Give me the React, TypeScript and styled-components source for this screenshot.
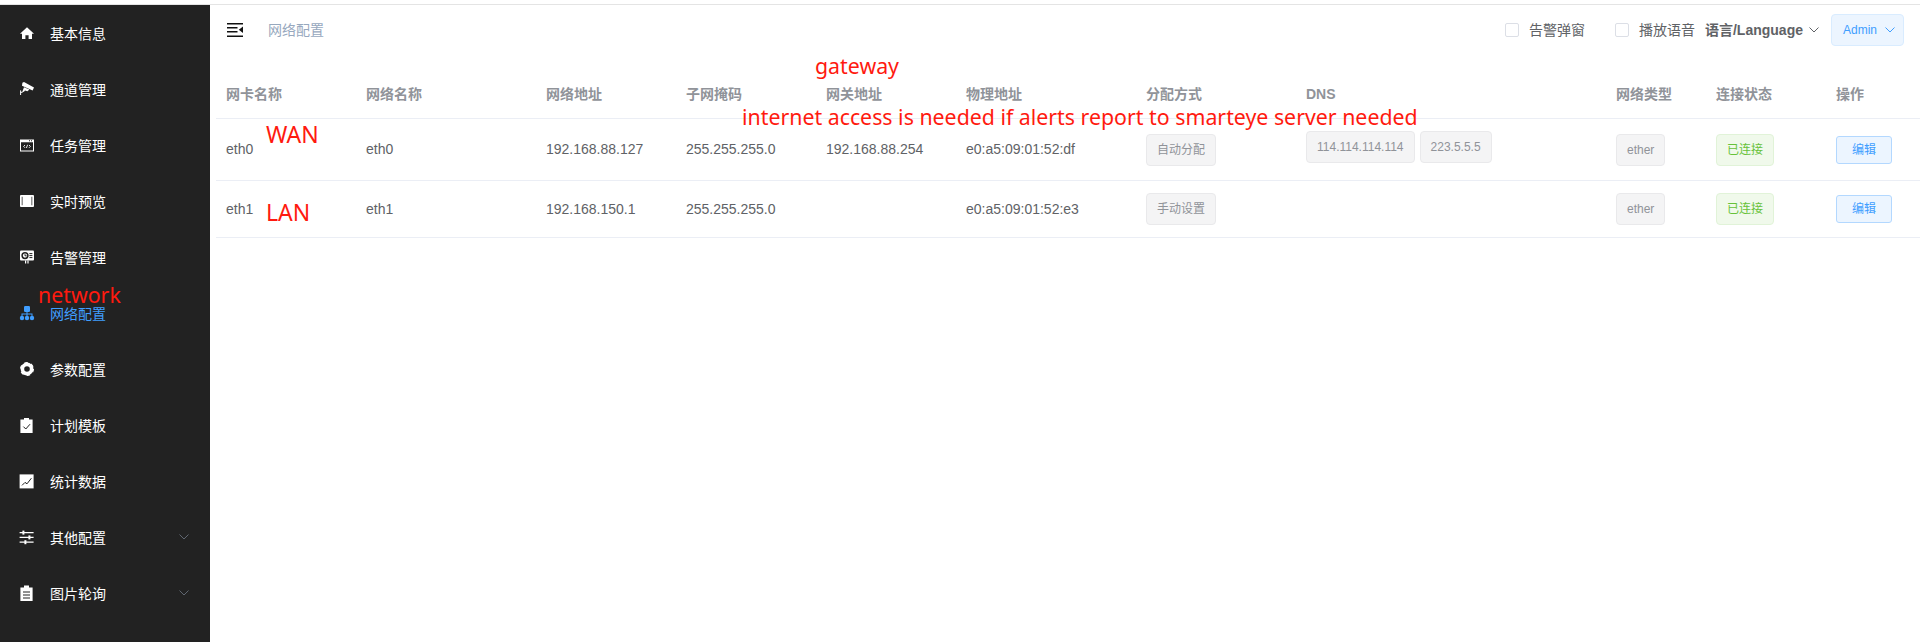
import React from 'react';
import styled, {createGlobalStyle} from 'styled-components';

const FONT = `"Liberation Sans", "Noto Sans CJK SC", sans-serif`;
const COLUMNS = '140px 180px 140px 140px 140px 180px 160px 310px 100px 120px 1fr';

const BG = '#222222';

const HomeIcon = () => (
    <svg viewBox="0 0 16 16" fill="currentColor">
        <path d="M8 2.2 15 8.8H13V14H9.6V10.2H6.400V14H3V8.8H1Z"/>
    </svg>
);

const CameraIcon = () => (
    <svg viewBox="0 0 16 16" fill="currentColor">
        <path d="M3.400 1.800 5 1 15 6.400 13.600 9.400 3 4.800Z"/>
        <path d="M5 6.200 10.400 8.600 8.400 10.200 6 9.400 4.800 11 3.400 10.400Z"/>
        <path d="M1.600 9.400V14" stroke="currentColor" strokeWidth="1"/>
        <path d="M1.600 11.600 4 10.800" stroke="currentColor" strokeWidth="1"/>
    </svg>
);

const WindowIcon = () => (
    <svg viewBox="0 0 16 16" fill="currentColor">
        <path fillRule="evenodd" d="M1 2.400h14v12H1ZM2 5.200v8.200h12V5.200Z"/>
        <path d="M10 3.200h1v1h-1ZM12 3.200h1v1h-1Z" fill={BG}/>
        <path d="M6 8 4.600 9.400 6 10.800M7.400 11 8.600 7.800M10 8l1.400 1.400L10 10.800" fill="none" stroke="currentColor" strokeWidth=".9"/>
    </svg>
);

const FilmIcon = () => (
    <svg viewBox="0 0 16 16" fill="currentColor">
        <rect x="1" y="2" width="14" height="12" rx="1"/>
        <path d="M2.600 3.800h1.200v8.400H2.600ZM12.200 3.800h1.200v8.400h-1.200Z" fill="#777"/>
    </svg>
);

const AlertIcon = () => (
    <svg viewBox="0 0 16 16" fill="currentColor">
        <rect x="1" y="1.600" width="14" height="10" rx="1"/>
        <circle cx="6" cy="6.600" r="2.900" fill="none" stroke={BG} strokeWidth="1.500"/>
        <path d="M6 5.200V6.800H7.600M10.400 4.600H13.400M10.400 6.600H13.400M10.400 8.600H13.400" fill="none" stroke={BG} strokeWidth="1"/>
        <path d="M6 11.600h1.200v3H6ZM8.400 11.600h1.200v3H8.400Z"/>
    </svg>
);

const NetworkIcon = () => (
    <svg viewBox="0 0 16 16" fill="currentColor">
        <rect x="5" y="1" width="6" height="6" rx="1.200"/>
        <path d="M7.500 6.500h1v2H13.500V11h-1V9.500H8.500V11h-1V9.500H3.500V11h-1V8.500H7.500Z"/>
        <circle cx="3" cy="13" r="2.200"/>
        <circle cx="8" cy="13" r="2.200"/>
        <circle cx="13" cy="13" r="2.200"/>
    </svg>
);

const GearIcon = () => (
    <svg viewBox="0 0 16 16" fill="none" stroke="currentColor">
        <circle cx="8" cy="8" r="4.600" strokeWidth="3.600"/>
        <circle cx="8" cy="8" r="6.400" strokeWidth="1.200" strokeDasharray="3.350 3.350"/>
    </svg>
);

const ClipboardCheckIcon = () => (
    <svg viewBox="0 0 16 16" fill="currentColor">
        <path d="M1.400 2.400H5V1h5v1.400h3.600V16H1.400Z"/>
        <path d="M4.400 9.600 6.800 12 11 7.200" fill="none" stroke={BG} strokeWidth="1"/>
    </svg>
);

const ChartIcon = () => (
    <svg viewBox="0 0 16 16" fill="currentColor">
        <rect x="0.600" y="1.400" width="14" height="14"/>
        <path d="M3 12.400 6 9.400 8 10.800 12.400 5.200" fill="none" stroke={BG} strokeWidth="1"/>
    </svg>
);

const SlidersIcon = () => (
    <svg viewBox="0 0 16 16" fill="currentColor">
        <path d="M.600 3h14v1.200H.600ZM.600 7.800h14V9H.600ZM.600 12.600h14v1.200H.600Z"/>
        <rect x="3.400" y="1.600" width="2" height="4"/>
        <rect x="9.400" y="6.400" width="2" height="4"/>
        <rect x="5.400" y="11.200" width="2" height="4"/>
    </svg>
);

const ClipboardListIcon = () => (
    <svg viewBox="0 0 16 16" fill="currentColor">
        <path d="M1.400 2.400H5V.600h5v1.800h3.600V16H1.400Z"/>
        <path d="M4 7h7M4 10h7M4 13h7" fill="none" stroke={BG} strokeWidth="1"/>
    </svg>
);

const Chevron = () => (
    <svg viewBox="0 0 10 6" fill="none" stroke="currentColor" strokeWidth="1">
        <path d="M.5.5 5 5 9.500.5"/>
    </svg>
);

const Hamburger = () => (
    <svg viewBox="0 0 16 14" width="16" height="14" fill="#111">
        <path d="M0 0h16v1.500H0ZM0 4h10.500v1.500H0ZM0 8h10.500v1.500H0ZM0 12.500h16V14H0ZM16 3.500v6.500L11.800 6.800Z"/>
    </svg>
);

const MENU = [
    {label: '基本信息', icon: <HomeIcon/>},
    {label: '通道管理', icon: <CameraIcon/>},
    {label: '任务管理', icon: <WindowIcon/>},
    {label: '实时预览', icon: <FilmIcon/>},
    {label: '告警管理', icon: <AlertIcon/>},
    {label: '网络配置', icon: <NetworkIcon/>, active: true},
    {label: '参数配置', icon: <GearIcon/>},
    {label: '计划模板', icon: <ClipboardCheckIcon/>},
    {label: '统计数据', icon: <ChartIcon/>},
    {label: '其他配置', icon: <SlidersIcon/>, sub: true},
    {label: '图片轮询', icon: <ClipboardListIcon/>, sub: true},
];

const HEADS = ['网卡名称', '网络名称', '网络地址', '子网掩码', '网关地址', '物理地址', '分配方式', 'DNS', '网络类型', '连接状态', '操作'];

const ROWS = [
    {
        name: 'eth0',
        ip: '192.168.88.127',
        mask: '255.255.255.0',
        gateway: '192.168.88.254',
        mac: 'e0:a5:09:01:52:df',
        mode: '自动分配',
        dns: ['114.114.114.114', '223.5.5.5'],
    },
    {
        name: 'eth1',
        ip: '192.168.150.1',
        mask: '255.255.255.0',
        gateway: '',
        mac: 'e0:a5:09:01:52:e3',
        mode: '手动设置',
        dns: [],
    },
];

export default function App() {
    return (
        <Page>
            <GlobalStyle/>
            <TopStrip/>
            <Body>
                <Sidebar>
                    {MENU.map(item => (
                        <MenuItem key={item.label} $active={item.active}>
                            <MenuIcon>{item.icon}</MenuIcon>
                            <span>{item.label}</span>
                            {item.sub && <MenuArrow><Chevron/></MenuArrow>}
                        </MenuItem>
                    ))}
                </Sidebar>
                <Main>
                    <Header>
                        <Hamburger/>
                        <Crumb>网络配置</Crumb>
                        <HeaderRight>
                            <CheckLabel><CheckBox/>告警弹窗</CheckLabel>
                            <CheckLabel><CheckBox/>播放语音</CheckLabel>
                            <Language>语言/Language<ChevronSlot><Chevron/></ChevronSlot></Language>
                            <AdminButton>Admin<ChevronSlot><Chevron/></ChevronSlot></AdminButton>
                        </HeaderRight>
                    </Header>
                    <HeadRow>
                        {HEADS.map(head => <HeadCell key={head}>{head}</HeadCell>)}
                    </HeadRow>
                    {ROWS.map(row => (
                        <Row key={row.name}>
                            <TextCell>{row.name}</TextCell>
                            <TextCell>{row.name}</TextCell>
                            <TextCell>{row.ip}</TextCell>
                            <TextCell>{row.mask}</TextCell>
                            <TextCell>{row.gateway}</TextCell>
                            <TextCell>{row.mac}</TextCell>
                            <Cell><Tag>{row.mode}</Tag></Cell>
                            <Cell>
                                <DnsList>
                                    {row.dns.map(dns => <DnsTag key={dns}>{dns}</DnsTag>)}
                                </DnsList>
                            </Cell>
                            <Cell><Tag>ether</Tag></Cell>
                            <Cell><SuccessTag>已连接</SuccessTag></Cell>
                            <Cell><EditButton>编辑</EditButton></Cell>
                        </Row>
                    ))}
                </Main>
            </Body>
            <Note $x={815} $y={50}>gateway</Note>
            <Note $x={742} $y={101}>internet access is needed if alerts report to smarteye server needed</Note>
            <Note $x={266} $y={118} $size={23}>WAN</Note>
            <Note $x={266} $y={196} $size={23}>LAN</Note>
            <Note $x={38} $y={279}>network</Note>
        </Page>
    );
}

const GlobalStyle = createGlobalStyle`
  html, body {
    margin: 0;
    height: 100%;
    background: #fff;
    overflow: hidden;
  }
  * {
    box-sizing: border-box;
  }
`

const Page = styled.div`
  position: relative;
  height: 642px;
  display: flex;
  flex-direction: column;
  font-family: ${FONT};
  font-size: 14px;
  line-height: 20px;
  color: #606266;
`

const TopStrip = styled.div`
  height: 5px;
  flex-shrink: 0;
  border-bottom: 1px solid #e4e4e4;
`

const Body = styled.div`
  flex-grow: 1;
  display: flex;
  min-height: 0;
`

const Sidebar = styled.div`
  width: 210px;
  flex-shrink: 0;
  padding-top: 1px;
  background: ${BG};
`

const MenuItem = styled.div<{$active?: boolean}>`
  position: relative;
  height: 56px;
  display: flex;
  align-items: center;
  padding-left: 19px;
  font-size: 14px;
  color: ${p => (p.$active ? '#409eff' : '#fff')};
`

const MenuIcon = styled.div`
  width: 16px;
  height: 16px;
  margin-right: 15px;
  margin-top: -2px;
  svg {
    display: block;
    width: 100%;
    height: 100%;
  }
`

const MenuArrow = styled.div`
  position: absolute;
  right: 21px;
  top: 24px;
  width: 10px;
  height: 6px;
  color: #5f6670;
  svg {
    display: block;
    width: 100%;
    height: 100%;
  }
`

const Main = styled.div`
  flex-grow: 1;
  min-width: 0;
  padding-left: 6px;
`

const Header = styled.div`
  height: 50px;
  display: flex;
  align-items: center;
  padding-left: 11px;
  padding-right: 16px;
`

const Crumb = styled.div`
  margin-left: 25px;
  font-size: 14px;
  color: #97a8be;
`

const HeaderRight = styled.div`
  margin-left: auto;
  display: flex;
  align-items: center;
`

const CheckLabel = styled.div`
  display: flex;
  align-items: center;
  column-gap: 10px;
  margin-right: 30px;
  font-size: 14px;
  color: #606266;
  &:nth-child(2) {
    margin-right: 10px;
  }
`

const CheckBox = styled.div`
  width: 14px;
  height: 14px;
  border: 1px solid #dcdfe6;
  border-radius: 2px;
  background: #fff;
`

const Language = styled.div`
  display: flex;
  align-items: center;
  column-gap: 6px;
  margin-right: 12px;
  font-weight: 700;
  font-size: 14px;
  color: #606266;
`

const ChevronSlot = styled.span`
  display: block;
  width: 10px;
  height: 6px;
  color: #606266;
  svg {
    display: block;
    width: 100%;
    height: 100%;
  }
`

const AdminButton = styled.div`
  width: 73px;
  height: 32px;
  display: flex;
  align-items: center;
  column-gap: 8px;
  padding-left: 11px;
  border: 1px solid #d9ecff;
  border-radius: 4px;
  background: #ecf5ff;
  font-size: 12px;
  color: #409eff;
  ${ChevronSlot} {
    color: #409eff;
  }
`

const HeadRow = styled.div`
  height: 64px;
  display: grid;
  grid-template-columns: ${COLUMNS};
  align-items: end;
  padding-bottom: 14px;
  border-bottom: 1px solid #ebeef5;
`

const HeadCell = styled.div`
  padding-left: 10px;
  font-weight: 700;
  font-size: 14px;
  line-height: 20px;
  color: #909399;
`

const Row = styled.div`
  display: grid;
  grid-template-columns: ${COLUMNS};
  align-items: center;
  padding: 12px 0;
  border-bottom: 1px solid #ebeef5;
`

const Cell = styled.div`
  padding-left: 10px;
  font-size: 14px;
  line-height: 20px;
  color: #606266;
`

const TextCell = styled(Cell)`
  padding-bottom: 1px;
`

const Tag = styled.span`
  display: inline-block;
  height: 32px;
  padding: 0 10px;
  border: 1px solid #e9e9eb;
  border-radius: 4px;
  background: #f4f4f5;
  font-size: 12px;
  line-height: 30px;
  color: #909399;
  vertical-align: top;
`

const DnsList = styled.div`
  display: flex;
  column-gap: 5px;
`

const DnsTag = styled(Tag)`
  margin-bottom: 5px;
`

const SuccessTag = styled(Tag)`
  border-color: #e1f3d8;
  background: #f0f9eb;
  color: #67c23a;
`

const EditButton = styled.div`
  width: 56px;
  height: 28px;
  margin-top: 2px;
  margin-bottom: 2px;
  border: 1px solid #b3d8ff;
  border-radius: 3px;
  background: #ecf5ff;
  font-size: 12px;
  line-height: 26px;
  text-align: center;
  color: #409eff;
`

const Note = styled.div<{$x: number; $y: number; $size?: number}>`
  position: absolute;
  left: ${p => p.$x}px;
  top: ${p => p.$y}px;
  font-family: "Noto Sans", "Open Sans", sans-serif;
  font-size: ${p => p.$size || 21.33}px;
  line-height: 32px;
  white-space: nowrap;
  color: #ff1a0f;
`
